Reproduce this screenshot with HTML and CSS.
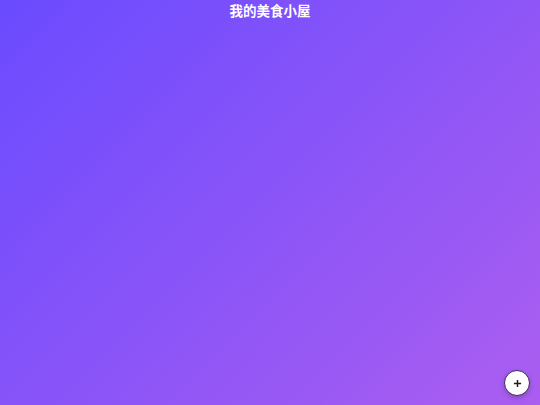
FILE: index.html
```html
<!DOCTYPE html>
<html lang="zh">
<head>
<meta charset="utf-8">
<title>我的美食小屋</title>
<link rel="stylesheet" href="styles.css">
</head>
<body>
<div class="app">
  <header class="header"><h1 class="title">我的美食小屋</h1></header>
  <main class="content"></main>
  <button class="fab" aria-label="添加">
    <svg class="fab-icon" viewBox="0 0 10 10" width="9" height="9"><path d="M5 1v8M1 5h8" stroke="#1c1c1c" stroke-width="1.6" fill="none"/></svg>
  </button>
</div>
</body>
</html>
```
FILE: styles.css
```css
html, body {
  margin: 0;
  padding: 0;
  height: 100%;
}
body {
  font-family: "Noto Sans CJK SC", "Noto Sans", sans-serif;
  background: linear-gradient(135deg, #6a4bff 0%, #ab5ef0 100%);
  min-height: 100vh;
}
.app {
  min-height: 100vh;
  display: flex;
  flex-direction: column;
}
.header {
  display: flex;
  justify-content: center;
  padding-top: 0;
}
.title {
  margin: 0;
  color: #ffffff;
  font-size: 13.5px;
  font-weight: 700;
  line-height: 20px;
}
.content {
  flex: 1;
}
.fab {
  position: fixed;
  right: 10px;
  bottom: 9px;
  width: 26px;
  height: 26px;
  border-radius: 50%;
  border: 1px solid #3a2a5a;
  background: #ffffff;
  padding: 0;
  display: flex;
  align-items: center;
  justify-content: center;
  box-shadow: 0 2px 5px rgba(0,0,0,0.2);
}
.fab-icon {
  display: block;
}
```
